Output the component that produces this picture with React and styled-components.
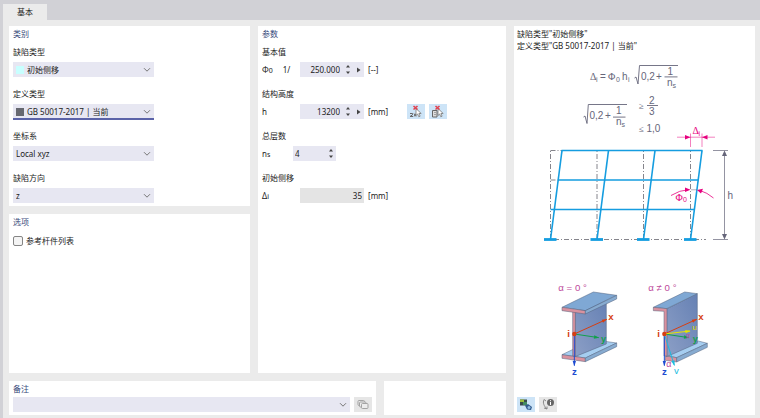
import React, { useState } from 'react';
import styled, { createGlobalStyle } from 'styled-components';

const GlobalStyle = createGlobalStyle`
  * {
    box-sizing: border-box;
  }

  body {
    margin: 0;
    background-color: #ebebeb;
    color: #222;
    font-family: 'Noto Sans', 'Noto Sans CJK SC', sans-serif;
    font-size: 8px;
    line-height: 16px;
  }

  button, input, select {
    margin: 0;
    padding: 0;
    border: none;
    color: inherit;
    font: inherit;
  }
`;

const Dialog = styled.div`
  display: flex;
  flex-direction: column;
  min-height: 100vh;
`;

const TabBar = styled.div`
  display: flex;
  align-items: flex-end;
  height: 20px;
  padding-left: 3px;
  background-color: #d1d1d6;
`;

const Tab = styled.button`
  height: 16px;
  padding: 0 14px;
  background-color: #ebebeb;
`;

const Content = styled.div`
  flex: 1;
  display: grid;
  grid-template-columns: minmax(0, 497fr) minmax(0, 241fr);
  gap: 8px;
  padding: 6px 5px 3px 6px;
  border-left: 3px solid #d1d1d6;
`;

const Main = styled.main`
  display: flex;
  flex-direction: column;
  gap: 8px;
`;

const Columns = styled.div`
  flex: 1;
  display: grid;
  grid-template-columns: minmax(0, 241fr) minmax(0, 248fr);
  gap: 8px;
`;

const Column = styled.div`
  display: flex;
  flex-direction: column;
  gap: 8px;
`;

const Footer = styled.div`
  display: grid;
  grid-template-columns: minmax(0, 367fr) minmax(0, 122fr);
  gap: 8px;
`;

const Panel = styled.section`
  flex: ${props => (props.$grow ? 1 : 'none')};
  padding: 0 4px 3px;
  background-color: white;
`;

const PanelTitle = styled.h2`
  margin: 0;
  color: #36497a;
  font-size: 8px;
  font-weight: 400;
`;

const Fields = styled.div`
  display: flex;
  flex-direction: column;
  gap: 9px;
  padding-top: 2px;
`;

const Field = styled.div`
  display: flex;
  flex-direction: column;
  gap: 2px;
`;

const Label = styled.label`
  display: block;
`;

const SelectBox = styled.div`
  display: flex;
  align-items: center;
  gap: 3px;
  width: ${props => (props.$wide ? 'auto' : '141px')};
  flex: ${props => (props.$wide ? 1 : 'none')};
  height: 15px;
  padding: 0 3px;
  background-color: #e7e7f2;
  box-shadow: ${props => (props.$active ? 'inset 0 -1px #5b63a8, 0 1px #5b63a8' : 'none')};
`;

const Swatch = styled.span`
  width: 8px;
  height: 8px;
  background-color: ${props => props.$color};
`;

const Select = styled.select`
  flex: 1;
  min-width: 0;
  height: 15px;
  appearance: none;
  background: transparent;
  outline: none;
`;

const Row = styled.div`
  display: flex;
  align-items: center;
  gap: 4px;
  height: 15px;
`;

const Symbol = styled.label`
  width: ${props => (props.$narrow ? '27px' : '34px')};
  line-height: 15px;
  display: flex;
  gap: 10px;
`;

const Sub = styled.span`
  font-size: 7px;
`;

const NumberBox = styled.div`
  display: flex;
  align-items: center;
  gap: 5px;
  width: ${props => (props.$small ? '43px' : '64px')};
  height: 15px;
  padding: 0 2px;
  background-color: ${props => (props.$readOnly ? '#e4e4e4' : '#e7e7f2')};
`;

const NumberInput = styled.input`
  flex: 1;
  min-width: 0;
  height: 15px;
  background: transparent;
  text-align: ${props => props.$align || 'right'};
  outline: none;
`;

const Spinner = styled.div`
  display: flex;
  flex-direction: column;
  width: 6px;
`;

const TinyButton = styled.button`
  display: flex;
  align-items: center;
  justify-content: center;
  width: 6px;
  height: 7px;
  background: transparent;
`;

const ToolButton = styled.button`
  display: flex;
  align-items: center;
  justify-content: center;
  width: 18px;
  height: 15px;
  background-color: ${props => (props.$on ? '#cde4f7' : '#e6e6e6')};
`;

const Tools = styled.div`
  display: flex;
  gap: 4px;
  margin-left: 15px;
`;

const CheckRow = styled.label`
  display: flex;
  align-items: center;
  gap: 3px;
  padding-top: 3px;
`;

const Checkbox = styled.input`
  width: 10px;
  height: 10px;
  appearance: none;
  border: 1px solid #858585;
  border-radius: 2px;
  background-color: #f4f4f4;

  &:checked {
    background-color: #5b63a8;
  }
`;

const Preview = styled.aside`
  display: flex;
  flex-direction: column;
  padding: 2px 0 3px;
  background-color: white;
`;

const Caption = styled.p`
  margin: 0;
  padding: 0 3px;
  line-height: 12px;
`;

const Picture = styled.svg`
  display: block;
  width: 100%;
  height: auto;
`;

const PreviewTools = styled.div`
  display: flex;
  gap: 4px;
  margin-top: auto;
  padding: 0 3px;
`;

function Chevron() {
  return (
    <svg width="8" height="6" viewBox="0 0 8 6" fill="none" stroke="#777" aria-hidden="true">
      <path d="M1 1.2 4 4.2 7 1.2" />
    </svg>
  );
}

function Arrow({ d }) {
  return (
    <svg width="6" height="6" viewBox="0 0 6 6" fill="#444" aria-hidden="true">
      <path d={d} />
    </svg>
  );
}

function SelectField({ id, label, options, swatch, active }) {
  return (
    <Field>
      <Label htmlFor={id}>{label}</Label>
      <SelectBox $active={active}>
        {swatch && <Swatch $color={swatch} />}
        <Select id={id}>
          {options.map((option) => (
            <option key={option}>{option}</option>
          ))}
        </Select>
        <Chevron />
      </SelectBox>
    </Field>
  );
}

function NumberField({ id, initial, small, readOnly, menu }) {
  const [value, setValue] = useState(initial);

  const step = (amount) => {
    const decimals = (value.split('.')[1] || '').length;
    setValue((Number(value) + amount).toFixed(decimals));
  };

  return (
    <NumberBox $small={small} $readOnly={readOnly}>
      <NumberInput
        id={id}
        value={value}
        readOnly={readOnly}
        $align={small ? 'left' : 'right'}
        onChange={(e) => setValue(e.target.value)}
      />
      {!readOnly && (
        <Spinner>
          <TinyButton type="button" aria-label="增加" onClick={() => step(1)}>
            <Arrow d="M1 4.5 3 2 5 4.5Z" />
          </TinyButton>
          <TinyButton type="button" aria-label="减少" onClick={() => step(-1)}>
            <Arrow d="M1 1.5 3 4 5 1.5Z" />
          </TinyButton>
        </Spinner>
      )}
      {menu && (
        <TinyButton type="button" aria-label="更多">
          <Arrow d="M1 0.5 4.5 3 1 5.5Z" />
        </TinyButton>
      )}
    </NumberBox>
  );
}

function PickIcon({ sheet }) {
  return (
    <svg width="14" height="13" viewBox="0 0 14 13" aria-hidden="true">
      {sheet ? (
        <>
          <path d="M1.5 5.5h4.5v6.5h-4.5z" fill="#ddd" stroke="#666" />
          <path d="M3 7.5h2M3 9.5h2" stroke="#888" strokeWidth="0.7" />
        </>
      ) : (
        <path d="M1 8.5h2.5v1.3L1 11.5h3M5 8.5l2 3M7 8.5l-2 3" fill="none" stroke="#666" />
      )}
      <path d="M7 3.5v7l1.6-1.5 1.2 2.8 1.3-.6-1.2-2.7h2.3z" fill="#fff" stroke="#777" strokeWidth="0.8" />
      <path d="M4.5 1 8.5 4.5M8.5 1 4.5 4.5" stroke="#e0414e" strokeWidth="1.6" />
    </svg>
  );
}

function CopyIcon() {
  return (
    <svg width="12" height="11" viewBox="0 0 12 11" fill="#ececec" stroke="#a3a3a3" aria-hidden="true">
      <rect x="1" y="1.5" width="6.5" height="5" rx="1" />
      <rect x="2.5" y="3" width="6.5" height="5" rx="1" />
      <rect x="4.5" y="4.5" width="6.5" height="5" rx="1" />
    </svg>
  );
}

function RenderIcon() {
  return (
    <svg width="14" height="13" viewBox="0 0 14 13" aria-hidden="true">
      <path d="M1 1.5h7v6H1z" fill="#394b4b" />
      <path d="M1 1.5h4v2.5H1z" fill="#9bbd3b" />
      <path d="M4 4h4v3H4z" fill="#408a60" />
      <path d="M6 7.5 9 6l4 3-1 3-4-.5z" fill="#315b8c" />
      <circle cx="10" cy="9.5" r="1.5" fill="#8eb9e1" />
    </svg>
  );
}

function InfoIcon() {
  return (
    <svg width="14" height="13" viewBox="0 0 14 13" fill="none" aria-hidden="true">
      <path d="M3 1.5C1.5 5 3 8 6 11V8.5M3 1.5 5 3" stroke="#888" />
      <path d="M6 11 3 10" stroke="#888" />
      <circle cx="9.5" cy="4.5" r="3.5" fill="#666" />
      <path d="M9.5 4v3M9.5 2.2v1" stroke="#fff" />
    </svg>
  );
}

const columns = [550.5, 597, 643.5, 690.5];

function FramePicture() {
  return (
    <Picture viewBox="514 52 241 223" role="img" aria-label="Δi, Φ0, h" fontFamily="Liberation Sans" fontSize="10" fill="#66667a">
      <g>
        <text x="590" y="80" fontFamily="Liberation Serif">Δ</text>
        <text x="596" y="82" fontSize="7">i</text>
        <text x="600" y="80">=</text>
        <text x="608" y="80" fontFamily="Liberation Serif">Φ</text>
        <text x="616" y="82" fontSize="7">0</text>
        <text x="622" y="80">h</text>
        <text x="628" y="82" fontSize="7">i</text>
        <path d="M634.5 78 636 77 638 84 639.5 65.5H678" fill="none" stroke="#66667a" strokeWidth="0.9" />
        <text x="641" y="80">0,2</text>
        <text x="656" y="80">+</text>
        <text x="667.5" y="75">1</text>
        <path d="M664.5 76.9H677.5M613 117.1H625.5M647 105.5H658" stroke="#66667a" strokeWidth="0.9" />
        <text x="667" y="86">n</text>
        <text x="672.5" y="88" fontSize="7">s</text>

        <path d="M583.5 117 585 116 587 123.5 588.3 104.5H627" fill="none" stroke="#66667a" strokeWidth="0.9" />
        <text x="589.5" y="119">0,2</text>
        <text x="605" y="119">+</text>
        <text x="616" y="114">1</text>
        <text x="616" y="125">n</text>
        <text x="621.5" y="127" fontSize="7">s</text>
        <text x="639" y="109" fontSize="9" fontFamily="Liberation Serif">≥</text>
        <text x="649" y="104">2</text>
        <text x="649" y="114.5">3</text>
        <text x="639" y="132" fontSize="9" fontFamily="Liberation Serif">≤</text>
        <text x="646.5" y="132">1,0</text>
      </g>

      <g fill="none" stroke="#77777f" strokeWidth="0.9" strokeDasharray="5 2 1 2">
        {columns.map((x) => (
          <path key={x} d={`M${x} 239V150.5`} />
        ))}
        <path d="M544 239.5H706M550.5 150.5H562M550.5 180H558" />
      </g>
      <g fill="none" stroke="#159de0" strokeWidth="1.6">
        {columns.map((x) => (
          <path key={x} d={`M${x} 239.5 ${x + 11.5} 150.5`} />
        ))}
        <path d="M561.5 150.5H702.5M558 180H698M550.5 209.5H694.5" />
        {columns.map((x) => (
          <path key={x} d={`M${x - 6.5} 239.5H${x + 6}`} strokeWidth="2.8" />
        ))}
      </g>

      <path d="M713 150.5H728M713 239.5H728M724.5 154V236" stroke="#66667a" strokeWidth="0.7" />
      <path d="M724.5 150.5 722 156H727ZM724.5 239.5 722 234H727Z" />
      <text x="727.5" y="199">h</text>

      <g fill="#e6007e">
        <path d="M677 137.2H715M690.5 133.5V147M702 133.5V147" stroke="#e6007e" strokeWidth="0.5" />
        <path d="M690.5 137.2 685 134.9V139.5ZM702 137.2 707.5 134.9V139.5Z" />
        <text x="692.5" y="134" fontFamily="Liberation Serif">Δ</text>
        <text x="698.5" y="135.5" fontSize="7">i</text>
        <path d="M671 195.5Q680 190 688 189.8M700 190.5Q707 192.5 713.5 198" fill="none" stroke="#e6007e" strokeWidth="0.8" />
        <path d="M690.5 189.8 685 187.6V192ZM697 190 703 188.8 701 193.4Z" />
        <path d="M691 189.8H697" stroke="#66667a" strokeWidth="0.5" />
        <text x="675.5" y="201" fontFamily="Liberation Serif">Φ</text>
        <text x="683" y="202" fontSize="7">0</text>
      </g>
    </Picture>
  );
}

function Beam({ rotated }) {
  return (
    <g stroke="#50627d" strokeWidth="1.5" strokeLinejoin="round">
      {rotated ? (
        <>
          <path d="M95 242 190 198 217 205 125 248Z" fill="#a5cdf0" />
          <path d="M92 243 125 248V261L90 256Z" fill="#d9929f" />
          <path d="M125 248 217 205V217L125 261Z" fill="#87abd0" />
          <path d="M95 101 187 56V205L95 245Z" fill="url(#web)" />
          <path d="M55 97 149 51 187 56 95 101Z" fill="#7fa8d4" />
          <path d="M55 97 96 101V243H87V109L55 107Z" fill="#d9929f" />
        </>
      ) : (
        <>
          <path d="M51 239 145 194 215 204 121 249Z" fill="#a5cdf0" />
          <path d="M51 239 121 249V260L51 250Z" fill="#d9929f" />
          <path d="M121 249 215 204V215L121 260Z" fill="#87abd0" />
          <path d="M90 112 184 78V207L90 245Z" fill="url(#web)" />
          <path d="M83 108H91V243H83Z" fill="#d9929f" />
          <path d="M51 97 145 51 215 61 121 107Z" fill="#7fa8d4" />
          <path d="M51 97 121 107V117L51 107Z" fill="#d9929f" />
          <path d="M121 107 215 61V72L121 117Z" fill="#87abd0" />
        </>
      )}
    </g>
  );
}

function Axis({ color, to, angle }) {
  return (
    <g stroke={color} fill={color} strokeWidth="3">
      <path d={`M88 177 ${to[0]} ${to[1]}`} />
      <path d="M2 0-14-5V5Z" stroke="none" transform={`translate(${to[0]} ${to[1]}) rotate(${angle})`} />
    </g>
  );
}

// Beams are drawn in units of a third of a pixel
function BeamPicture() {
  return (
    <Picture viewBox="514 275 241 106" role="img" aria-label="α = 0 °, α ≠ 0 °" fontFamily="Liberation Sans">
      <defs>
        <linearGradient id="web" x1="0" y1="1" x2="1" y2="0">
          <stop offset="0" stopColor="#8c9fc6" />
          <stop offset="1" stopColor="#6681b4" />
        </linearGradient>
      </defs>
      {[false, true].map((rotated) => (
        <g key={String(rotated)} transform={`translate(${rotated ? 635 : 545} 275) scale(0.3333)`} fontSize="29">
          <text x="40" y="47" fill="#bd4a9b">{rotated ? 'α ≠ 0 °' : 'α = 0 °'}</text>
          <Beam rotated={rotated} />
          <Axis color="#1d4bd1" to={[88, 272]} angle={90} />
          <Axis color="#d63e12" to={[185, 133]} angle={-24} />
          <Axis color="#12a04b" to={[161, 188]} angle={8} />
          {rotated && (
            <>
              <Axis color="#e5e500" to={[165, 168]} angle={-7} />
              <Axis color="#1bbce0" to={[118, 271]} angle={73} />
              <text x="172" y="166" fontSize="24" fill="#e0dc00">u</text>
              <text x="117" y="296" fill="#1bbce0">v</text>
              <text x="152" y="190" fontSize="22" fill="#bd4a9b">α</text>
              <text x="94" y="275" fontSize="27" fill="#bd4a9b">α</text>
            </>
          )}
          <circle cx="88" cy="177" r="6.5" fill="#d63e12" />
          <text x="67" y="187" fontWeight="700" fill="#d63e12">i</text>
          <g stroke="currentColor" strokeWidth="0">
            <text x="190" y="135" fontWeight="700" fill="#d63e12">x</text>
            <text x={rotated ? 173 : 168} y="201" fontSize="27" fontWeight="700" fill="#12a04b">y</text>
            <text x="81" y="301" fontWeight="700" fill="#1d4bd1">z</text>
          </g>
        </g>
      ))}
    </Picture>
  );
}

function App() {
  return (
    <Dialog>
      <GlobalStyle />
      <TabBar role="tablist">
        <Tab type="button" role="tab" aria-selected="true">基本</Tab>
      </TabBar>
      <Content>
        <Main>
          <Columns>
            <Column>
              <Panel>
                <PanelTitle>类别</PanelTitle>
                <Fields>
                  <SelectField id="type" label="缺陷类型" options={['初始侧移']} swatch="#c8ffff" />
                  <SelectField id="definition" label="定义类型" options={['GB 50017-2017 | 当前']} swatch="#666870" active />
                  <SelectField id="system" label="坐标系" options={['Local xyz']} />
                  <SelectField id="direction" label="缺陷方向" options={['z']} />
                </Fields>
              </Panel>
              <Panel $grow>
                <PanelTitle>选项</PanelTitle>
                <CheckRow>
                  <Checkbox type="checkbox" />
                  参考杆件列表
                </CheckRow>
              </Panel>
            </Column>
            <Panel $grow>
              <PanelTitle>参数</PanelTitle>
              <Fields>
                <Field>
                  <Label as="span">基本值</Label>
                  <Row>
                    <Symbol htmlFor="phi">
                      <span>Φ<Sub>0</Sub></span>
                      <span>1/</span>
                    </Symbol>
                    <NumberField id="phi" initial="250.000" menu />
                    <span>[--]</span>
                  </Row>
                </Field>
                <Field>
                  <Label as="span">结构高度</Label>
                  <Row>
                    <Symbol htmlFor="height">h</Symbol>
                    <NumberField id="height" initial="13200" menu />
                    <span>[mm]</span>
                    <Tools>
                      <ToolButton type="button" $on aria-label="选择两点"><PickIcon /></ToolButton>
                      <ToolButton type="button" $on aria-label="选择杆件"><PickIcon sheet /></ToolButton>
                    </Tools>
                  </Row>
                </Field>
                <Field>
                  <Label as="span">总层数</Label>
                  <Row>
                    <Symbol htmlFor="storeys" $narrow>
                      <span>n<Sub>s</Sub></span>
                    </Symbol>
                    <NumberField id="storeys" initial="4" small />
                  </Row>
                </Field>
                <Field>
                  <Label as="span">初始侧移</Label>
                  <Row>
                    <Symbol htmlFor="sway">
                      <span>Δ<Sub>i</Sub></span>
                    </Symbol>
                    <NumberField id="sway" initial="35" readOnly />
                    <span>[mm]</span>
                  </Row>
                </Field>
              </Fields>
            </Panel>
          </Columns>
          <Footer>
            <Panel>
              <PanelTitle as="label" htmlFor="comment">备注</PanelTitle>
              <Row>
                <SelectBox $wide>
                  <Select id="comment" defaultValue="">
                    <option value=""></option>
                  </Select>
                  <Chevron />
                </SelectBox>
                <ToolButton type="button" aria-label="备注列表"><CopyIcon /></ToolButton>
              </Row>
            </Panel>
            <Panel />
          </Footer>
        </Main>
        <Preview>
          <Caption>缺陷类型"初始侧移"</Caption>
          <Caption>定义类型"GB 50017-2017 | 当前"</Caption>
          <FramePicture />
          <BeamPicture />
          <PreviewTools>
            <ToolButton type="button" $on aria-label="图形"><RenderIcon /></ToolButton>
            <ToolButton type="button" aria-label="信息"><InfoIcon /></ToolButton>
          </PreviewTools>
        </Preview>
      </Content>
    </Dialog>
  );
}

export default App;
